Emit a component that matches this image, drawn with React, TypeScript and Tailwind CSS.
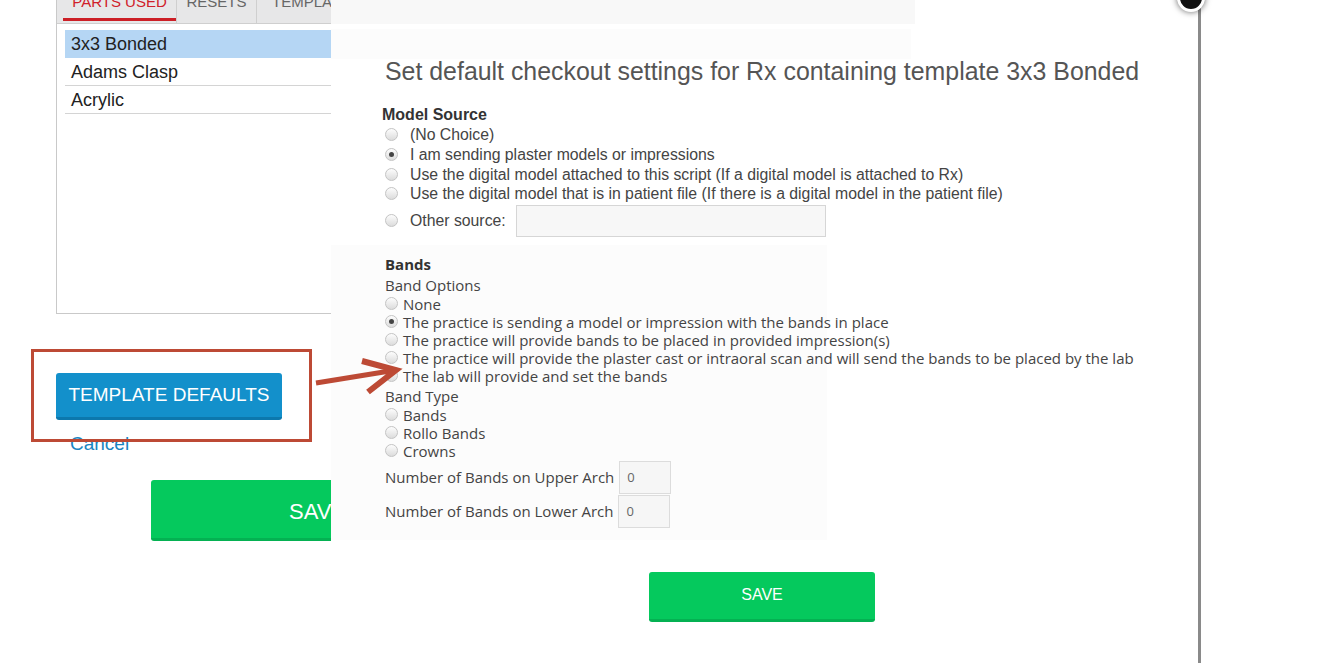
import React from 'react';

function Radio({ checked = false }: { checked?: boolean }) {
  return (
    <span className="inline-flex w-[13px] h-[13px] shrink-0 items-center justify-center rounded-full border border-[#c4c4c4] bg-gradient-to-b from-[#fdfdfd] to-[#dcdcdc]">
      {checked && <span className="w-[5px] h-[5px] rounded-full bg-[#444]" />}
    </span>
  );
}

const modelSource = [
  { label: '(No Choice)' },
  { label: 'I am sending plaster models or impressions', checked: true },
  { label: 'Use the digital model attached to this script (If a digital model is attached to Rx)' },
  { label: 'Use the digital model that is in patient file (If there is a digital model in the patient file)' },
];

const bandOptions = [
  { label: 'None' },
  { label: 'The practice is sending a model or impression with the bands in place', checked: true },
  { label: 'The practice will provide bands to be placed in provided impression(s)' },
  { label: 'The practice will provide the plaster cast or intraoral scan and will send the bands to be placed by the lab' },
  { label: 'The lab will provide and set the bands' },
];

const bandTypes = ['Bands', 'Rollo Bands', 'Crowns'];

export default function App() {
  return (
    <div className="relative w-[1330px] h-[663px] overflow-hidden bg-white font-['Liberation_Sans',Arial,sans-serif]">
      {/* page behind the dialog */}
      <div className="flex flex-col pl-[56px]">
        <div className="w-[400px] h-[314px] border-l border-b border-[#c9c9c9] flex flex-col">
          <div className="h-[24px] bg-[#e7e7e8] border-b border-[#cfcfcf] flex items-start px-[6px] overflow-hidden">
            <div className="relative h-full w-[114px] border-r border-[#cfcfcf]">
              <div className="-mt-[9px] text-center text-[15px] text-[#d0202a]">PARTS USED</div>
              <div className="absolute left-0 right-0 top-[18px] h-[3px] bg-[#cc1f26]" />
            </div>
            <div className="h-full w-[80px] border-r border-[#cfcfcf]">
              <div className="-mt-[9px] text-center text-[15px] text-[#666]">RESETS</div>
            </div>
            <div className="h-full w-[100px]">
              <div className="-mt-[9px] pl-[15px] text-[15px] text-[#666]">TEMPLATES</div>
            </div>
          </div>
          <div className="px-[8px] pt-[6px] text-[18px] text-[#222]">
            <div className="h-[28px] bg-[#b5d6f4] pl-[6px] leading-[28px]">3x3 Bonded</div>
            <div className="h-[28px] border-b border-[#d4d4d4] pl-[6px] leading-[28px]">Adams Clasp</div>
            <div className="h-[28px] border-b border-[#d4d4d4] pl-[6px] leading-[28px]">Acrylic</div>
          </div>
        </div>

        <button className="mt-[59px] w-[226px] h-[47px] rounded-[3px] bg-[#1390cb] border-b-[3px] border-[#0c78ad] text-white text-[19px]">
          TEMPLATE DEFAULTS
        </button>
        <div className="mt-[13px] pl-[14px] text-[19px] leading-[22px] text-[#1985c2]">Cancel</div>

        <div className="mt-[25px] ml-[95px] w-[260px] h-[61px] rounded-[3px] bg-[#05c95d] border-b-[3px] border-[#04b152] text-white text-[22px] pl-[138px] pt-[15px]">
          SAVE
        </div>
      </div>

      {/* dialog */}
      <div className="absolute left-[331px] top-0 w-[867px] h-[663px] bg-white">
        <div className="absolute left-0 top-0 w-[584px] h-[24px] bg-[#f8f8f8]" />
        <div className="absolute left-0 top-[29px] w-[580px] h-[30px] bg-[#fcfcfc]" />
        <div className="absolute left-0 top-[245px] w-[496px] h-[295px] bg-[#fcfcfc]" />

        <div className="relative flex flex-col pl-[51px] pt-[56px]">
          <h1 className="pl-[3px] text-[24.9px] leading-[30px] text-[#555] font-normal whitespace-nowrap">
            Set default checkout settings for Rx containing template 3x3 Bonded
          </h1>

          <div className="mt-[20px] text-[16px] leading-[18px] font-bold text-[#333]">Model Source</div>
          <div className="mt-[1px] flex flex-col text-[15.8px] text-[#444]">
            {modelSource.map((o) => (
              <div key={o.label} className="flex items-center h-[19.7px] pl-[3px]">
                <Radio checked={o.checked} />
                <span className="ml-[12px] leading-[19px] whitespace-nowrap">{o.label}</span>
              </div>
            ))}
            <div className="flex items-center pl-[3px] mt-[1px]">
              <Radio />
              <span className="ml-[12px] mr-[10px]">Other source:</span>
              <span className="w-[310px] h-[32px] border border-[#d6d6d6] bg-[#f7f7f7]" />
            </div>
          </div>

          <div className="flex flex-col font-['Open_Sans','Liberation_Sans',sans-serif] text-[#444] pl-[3px]">
            <div className="mt-[17px] text-[15px] leading-[20px] font-bold text-[#333]">Bands</div>
            <div className="mt-[2px] text-[15px] leading-[19px]">Band Options</div>
            {bandOptions.map((o) => (
              <div key={o.label} className="flex items-center h-[18px] text-[15px]">
                <Radio checked={o.checked} />
                <span className="ml-[5px] whitespace-nowrap">{o.label}</span>
              </div>
            ))}
            <div className="mt-[1px] text-[15px] leading-[20px]">Band Type</div>
            {bandTypes.map((t) => (
              <div key={t} className="flex items-center h-[18px] text-[15px]">
                <Radio />
                <span className="ml-[5px]">{t}</span>
              </div>
            ))}
            <div className="mt-[1px] flex items-center gap-[5px] text-[15px]">
              <span>Number of Bands on Upper Arch</span>
              <span className="w-[52px] h-[33px] border border-[#dcdcdc] bg-[#f6f6f6] pl-[7px] leading-[31px] text-[13px] text-[#666]">0</span>
            </div>
            <div className="mt-[1px] flex items-center gap-[5px] text-[15px]">
              <span>Number of Bands on Lower Arch</span>
              <span className="w-[52px] h-[33px] border border-[#dcdcdc] bg-[#f6f6f6] pl-[7px] leading-[31px] text-[13px] text-[#666]">0</span>
            </div>
          </div>

          <div className="mt-[44px] ml-[267px] w-[226px] h-[50px] rounded-[3px] bg-[#05c95d] border-b-[3px] border-[#04b152] text-white text-[16px] flex items-center justify-center">
            SAVE
          </div>
        </div>
      </div>

      {/* right edge of the dialog frame and close button */}
      <div className="absolute left-[1198px] top-[8px] w-[3px] h-[655px] bg-[#8a8a8a]" />
      <div className="absolute left-[1177px] -top-[16px] w-[28px] h-[28px] rounded-full bg-[#111] border-[3px] border-white shadow-[0_0_6px_rgba(0,0,0,0.6)]" />

      {/* annotation */}
      <div className="absolute left-[31px] top-[349px] w-[281px] h-[93px] border-[3px] border-[#bd4a35]" />
      <svg className="absolute left-[310px] top-[355px]" width="95" height="45" viewBox="0 0 95 45">
        <path d="M6 28 L80 16" stroke="#bd4a35" strokeWidth="5" fill="none" />
        <path d="M52 6 L86 15 L58 37" stroke="#bd4a35" strokeWidth="6" fill="none" strokeLinejoin="miter" />
      </svg>
    </div>
  );
}
